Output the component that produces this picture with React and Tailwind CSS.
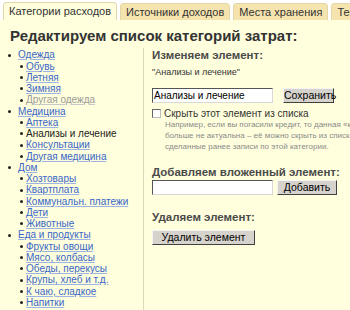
export default function App() {
  const tabs = ['Категории расходов', 'Источники доходов', 'Места хранения', 'Темы'];
  const tree = [
    { name: 'Одежда', kids: [['Обувь'], ['Летняя'], ['Зимняя'], ['Другая одежда', 'muted']] },
    { name: 'Медицина', kids: [['Аптека'], ['Анализы и лечение', 'current'], ['Консультации'], ['Другая медицина']] },
    { name: 'Дом', kids: [['Хозтовары'], ['Квартплата'], ['Коммунальн. платежи'], ['Дети'], ['Животные']] },
    { name: 'Еда и продукты', kids: [['Фрукты овощи'], ['Мясо, колбасы'], ['Обеды, перекусы'], ['Крупы, хлеб и т.д.'], ['К чаю, сладкое'], ['Напитки']] }
  ];

  const itemClass = kind =>
    kind === 'muted'
      ? 'text-[#9a9a9a] underline decoration-[#c8c8c8]'
      : kind === 'current'
        ? 'text-[#222222]'
        : 'text-[#3a66c8] underline decoration-[#9db4e6]';

  const btn =
    'h-[15px] bg-[#d6d3cc] text-[10.5px] text-black leading-none border border-t-[#f4f4f4] border-l-[#f4f4f4] border-r-[#404040] border-b-[#404040]';
  const input =
    'w-[121px] h-[15px] bg-white border border-t-[#555] border-l-[#555] border-r-[#d8d8d8] border-b-[#d8d8d8]';

  return (
    <div className="w-[350px] h-[310px] overflow-hidden bg-white font-['Liberation_Sans',Arial,sans-serif]">
      <div className="flex items-end gap-[3px] pl-[3px] h-[20px]">
        {tabs.map((t, i) => (
          <div
            key={t}
            className={
              'shrink-0 px-[5px] rounded-t-[4px] border border-b-0 border-[#e2d7a8] text-[11px] leading-[17px] text-[#333] whitespace-nowrap ' +
              (i === 0 ? 'bg-[#ffffdd] h-[18px]' : 'bg-[#f6e4ae] h-[17px]')
            }
          >
            {t}
          </div>
        ))}
      </div>
      <div className="bg-[#ffffdd] h-[290px] pl-[10px] pt-[7px]">
        <h1 className="text-[15px] font-bold text-[#333] leading-[18px]">Редактируем список категорий затрат:</h1>
        <div className="flex mt-[3px]">
          <ul className="w-[135px] shrink-0 pt-[1.4px] text-[10px] leading-[11.25px] -ml-[2px]">
            {tree.map(g => (
              <li key={g.name}>
                <div className="flex items-center">
                  <span className="w-[10px] flex">
                    <span className="w-[3px] h-[3px] rounded-full bg-[#222]"></span>
                  </span>
                  <span className={itemClass()}>{g.name}</span>
                </div>
                <ul className="pl-[12px]">
                  {g.kids.map(([k, kind]) => (
                    <li key={k} className="flex items-center">
                      <span className="w-[6px] flex">
                        <span className="w-[3px] h-[3px] rounded-full bg-[#222]"></span>
                      </span>
                      <span className={itemClass(kind)}>{k}</span>
                    </li>
                  ))}
                </ul>
              </li>
            ))}
          </ul>
          <div className="border-l border-[#dcd8bc] pl-[8px] h-[262px] text-[#4a4a4a]">
            <div className="text-[11.5px] font-bold leading-[14px]">Изменяем элемент:</div>
            <div className="text-[9px] leading-[12px] mt-[4px] text-[#333]">"Анализы и лечение"</div>
            <div className="flex items-center mt-[10px]">
              <div className={input + ' text-[10px] leading-[13px] text-black pl-[1px]'}>Анализы и лечение</div>
              <button className={btn + ' w-[51px] ml-[10px]'}>Сохранить</button>
            </div>
            <div className="flex items-center mt-[5px] text-[10px] leading-[11px] text-[#333]">
              <span className="w-[9px] h-[9px] border border-t-[#666] border-l-[#666] border-r-[#bbb] border-b-[#bbb] bg-white mr-[3px]"></span>
              Скрыть этот элемент из списка
            </div>
            <div className="pl-[13px] text-[8px] leading-[11px] text-[#8a8a8a] whitespace-nowrap">
              <div>Например, если вы погасили кредит, то данная «ка</div>
              <div>больше не актуальна – её можно скрыть из списка</div>
              <div>сделанные ранее записи по этой категории.</div>
            </div>
            <div className="text-[11.5px] font-bold leading-[14px] mt-[13px] whitespace-nowrap">Добавляем вложенный элемент:</div>
            <div className="flex items-center mt-[1px]">
              <div className={input}></div>
              <button className={btn + ' w-[60px] ml-[4px]'}>Добавить</button>
            </div>
            <div className="text-[11.5px] font-bold leading-[14px] mt-[15px]">Удаляем элемент:</div>
            <button className={btn + ' w-[103px] mt-[5px]'}>Удалить элемент</button>
          </div>
        </div>
      </div>
    </div>
  );
}
